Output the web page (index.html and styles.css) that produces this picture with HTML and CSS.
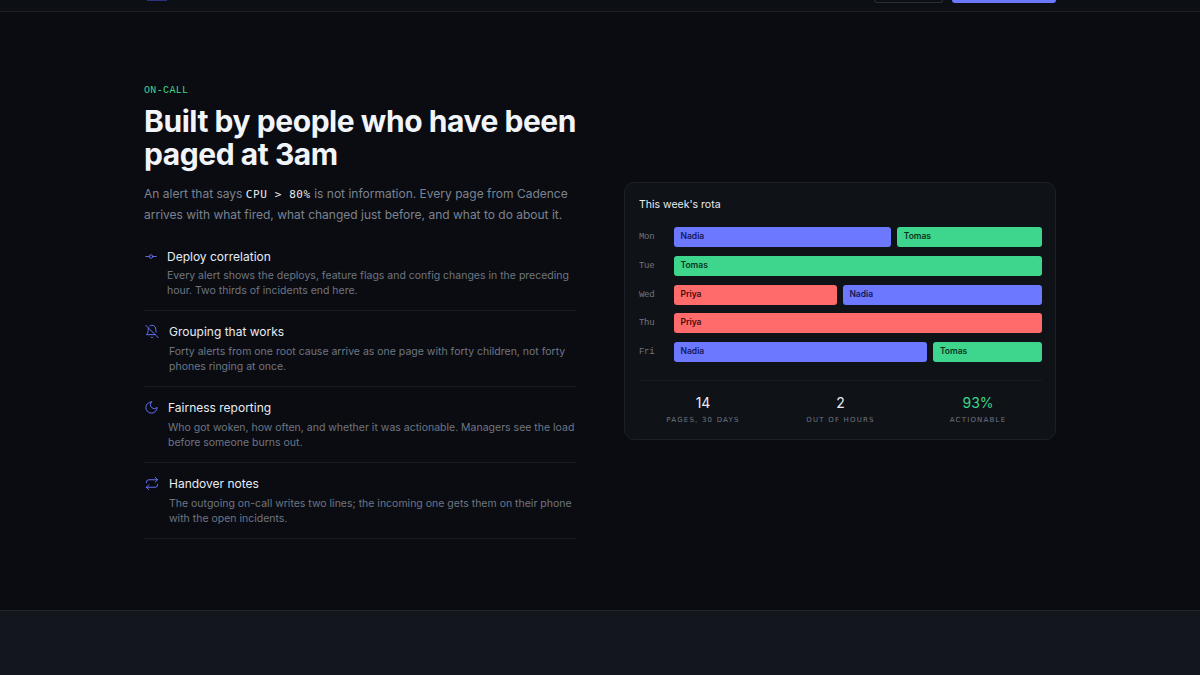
FILE: index.html
```html
<!DOCTYPE html>
<html lang="en">
<head>
    <meta charset="UTF-8">
    <meta name="viewport" content="width=device-width, initial-scale=1.0">
    <title>Cadence - On-call</title>
    <link rel="stylesheet" href="styles.css">
</head>
<body>
    <nav class="nav">
        <div class="nav-inner">
            <span class="logo-mark"></span>
            <div class="nav-actions">
                <span class="btn-ghost"></span>
                <span class="btn-primary"></span>
            </div>
        </div>
    </nav>

    <section class="oncall">
        <div class="oncall-inner">
            <div class="intro">
                <p class="eyebrow">ON-CALL</p>
                <h1>Built by people who have been paged at 3am</h1>
                <p class="lead">An alert that says <code>CPU &gt; 80%</code> is not information. Every page from Cadence arrives with what fired, what changed just before, and what to do about it.</p>

                <ul class="features">
                    <li class="feature">
                        <svg class="icon icon-commit" viewBox="0 0 24 24"><circle cx="12" cy="12" r="3"/><line x1="3" y1="12" x2="9" y2="12"/><line x1="15" y1="12" x2="21" y2="12"/></svg>
                        <div>
                            <h3>Deploy correlation</h3>
                            <p>Every alert shows the deploys, feature flags and config changes in the preceding hour. Two thirds of incidents end here.</p>
                        </div>
                    </li>
                    <li class="feature">
                        <svg class="icon icon-bell" viewBox="0 0 24 24"><path d="M8.7 3A6 6 0 0 1 18 8a21.3 21.3 0 0 0 .6 5"/><path d="M17 17H3s3-2 3-9a4.67 4.67 0 0 1 .3-1.7"/><path d="M10.3 21a1.94 1.94 0 0 0 3.4 0"/><line x1="2" y1="2" x2="22" y2="22"/></svg>
                        <div>
                            <h3>Grouping that works</h3>
                            <p>Forty alerts from one root cause arrive as one page with forty children, not forty phones ringing at once.</p>
                        </div>
                    </li>
                    <li class="feature">
                        <svg class="icon icon-moon" viewBox="0 0 24 24"><path d="M12 3a6 6 0 0 0 9 9 9 9 0 1 1-9-9Z"/></svg>
                        <div>
                            <h3>Fairness reporting</h3>
                            <p>Who got woken, how often, and whether it was actionable. Managers see the load before someone burns out.</p>
                        </div>
                    </li>
                    <li class="feature">
                        <svg class="icon icon-repeat" viewBox="0 0 24 24"><path d="m17 2 4 4-4 4"/><path d="M3 11v-1a4 4 0 0 1 4-4h14"/><path d="m7 22-4-4 4-4"/><path d="M21 13v1a4 4 0 0 1-4 4H3"/></svg>
                        <div>
                            <h3>Handover notes</h3>
                            <p>The outgoing on-call writes two lines; the incoming one gets them on their phone with the open incidents.</p>
                        </div>
                    </li>
                </ul>
            </div>

            <div class="rota-card">
                <h4>This week's rota</h4>
                <div class="rota">
                    <div class="rota-row">
                        <span class="day">Mon</span>
                        <div class="shifts">
                            <span class="shift shift-nadia" style="flex: 60">Nadia</span>
                            <span class="shift shift-tomas" style="flex: 40">Tomas</span>
                        </div>
                    </div>
                    <div class="rota-row">
                        <span class="day">Tue</span>
                        <div class="shifts">
                            <span class="shift shift-tomas" style="flex: 100">Tomas</span>
                        </div>
                    </div>
                    <div class="rota-row">
                        <span class="day">Wed</span>
                        <div class="shifts">
                            <span class="shift shift-priya" style="flex: 45">Priya</span>
                            <span class="shift shift-nadia" style="flex: 55">Nadia</span>
                        </div>
                    </div>
                    <div class="rota-row">
                        <span class="day">Thu</span>
                        <div class="shifts">
                            <span class="shift shift-priya" style="flex: 100">Priya</span>
                        </div>
                    </div>
                    <div class="rota-row">
                        <span class="day">Fri</span>
                        <div class="shifts">
                            <span class="shift shift-nadia" style="flex: 70">Nadia</span>
                            <span class="shift shift-tomas" style="flex: 30">Tomas</span>
                        </div>
                    </div>
                </div>
                <div class="stats">
                    <div class="stat">
                        <div class="stat-value">14</div>
                        <div class="stat-label">PAGES, 30 DAYS</div>
                    </div>
                    <div class="stat">
                        <div class="stat-value">2</div>
                        <div class="stat-label">OUT OF HOURS</div>
                    </div>
                    <div class="stat">
                        <div class="stat-value stat-good">93%</div>
                        <div class="stat-label">ACTIONABLE</div>
                    </div>
                </div>
            </div>
        </div>
    </section>

    <footer class="next-band"></footer>
</body>
</html>
```

FILE: styles.css
```css
* {
    margin: 0;
    padding: 0;
    box-sizing: border-box;
}
body {
    background: #0a0c12;
    font-family: 'Inter', sans-serif;
    color: #e8ecf2;
    height: 675px;
    overflow: hidden;
}
.nav {
    height: 12px;
    background: #0c0f14;
    border-bottom: 1px solid #1c2127;
    overflow: hidden;
}
.nav-inner {
    width: 912px;
    height: 11px;
    margin: 0 auto;
    display: flex;
    justify-content: space-between;
    align-items: flex-start;
}
.logo-mark {
    width: 20px;
    height: 1px;
    margin-left: 3px;
    background: #2b3080;
}
.nav-actions {
    display: flex;
    gap: 9px;
}
.btn-ghost {
    width: 69px;
    height: 3px;
    border: 1px solid #2a2f36;
    border-top: none;
    border-radius: 0 0 6px 6px;
}
.btn-primary {
    width: 104px;
    height: 3px;
    background: #6b78ff;
    border-radius: 0 0 6px 6px;
}
.oncall {
    height: 598px;
    padding: 72px 0;
}
.oncall-inner {
    width: 912px;
    margin: 0 auto;
    display: grid;
    grid-template-columns: 432px 432px;
    gap: 48px;
    align-items: start;
}
.eyebrow {
    font-family: 'Liberation Mono', monospace;
    font-size: 10px;
    line-height: 12px;
    letter-spacing: 0.35px;
    color: #3dd68c;
    padding-top: 1px;
    margin-bottom: 8px;
}
h1 {
    font-size: 30px;
    line-height: 33px;
    font-weight: 700;
    letter-spacing: -0.45px;
    color: #f1f4f9;
    margin-bottom: 13px;
}
.lead {
    font-size: 12px;
    line-height: 20px;
    color: #7c8390;
    margin-bottom: 10px;
}
.lead code {
    font-family: 'DejaVu Sans Mono', monospace;
    font-size: 11px;
    letter-spacing: 0.6px;
    color: #e8ecf2;
}
.features {
    list-style: none;
}
.feature {
    display: flex;
    gap: 9px;
    padding: 12.4px 0 12px;
    border-bottom: 1px solid #161a20;
}
.feature:first-child {
    padding: 12.6px 0 11.8px;
}
.feature h3 {
    font-size: 12px;
    line-height: 17px;
    font-weight: 400;
    color: #e8ecf2;
    margin-bottom: 3.6px;
}
.feature p {
    font-size: 10.5px;
    line-height: 15px;
    color: #6f7682;
}
.icon {
    flex: none;
    height: 15px;
    margin-top: 1px;
    fill: none;
    stroke: #6b78ff;
    stroke-width: 1.5;
    stroke-linecap: round;
    stroke-linejoin: round;
}
.icon-commit { width: 14px; }
.icon-bell { width: 16px; }
.icon-moon { width: 15px; }
.icon-repeat { width: 16px; }
.rota-card {
    margin-top: 98px;
    background: #0f1217;
    border: 1px solid #1c2127;
    border-radius: 10px;
    padding: 14px 13px 13px 14px;
}
.rota-card h4 {
    font-size: 10.5px;
    line-height: 16px;
    font-weight: 400;
    color: #e8ecf2;
    margin-bottom: 14px;
}
.rota {
    display: flex;
    flex-direction: column;
    gap: 8.75px;
}
.rota-row {
    display: flex;
    align-items: center;
}
.day {
    width: 35px;
    font-family: 'Liberation Mono', monospace;
    font-size: 9px;
    letter-spacing: -0.3px;
    color: #6f7682;
}
.shifts {
    flex: 1;
    display: flex;
    gap: 6px;
}
.shift {
    height: 20px;
    text-indent: 6.5px;
    border-radius: 3px;
    font-size: 8.5px;
    font-weight: 600;
    line-height: 18px;
}
.shift-nadia { background: #6b78ff; color: #14185a; }
.shift-tomas { background: #3dd68c; color: #07351f; }
.shift-priya { background: #ff6b6b; color: #4a0a0a; }
.stats {
    display: grid;
    grid-template-columns: repeat(3, 125px);
    gap: 12.5px;
    justify-content: center;
    margin-top: 18px;
    padding-top: 13px;
    border-top: 1px solid #191d23;
    text-align: center;
}
.stat-value {
    font-size: 14px;
    line-height: 18px;
    color: #e8ecf2;
}
.stat-good { color: #3dd68c; }
.stat-label {
    font-family: 'DejaVu Sans', sans-serif;
    font-size: 7px;
    line-height: 12px;
    letter-spacing: 1.2px;
    color: #6f7682;
    margin-top: 2px;
}
.next-band {
    height: 65px;
    background: #13171d;
    border-top: 1px solid #23272d;
}
```
